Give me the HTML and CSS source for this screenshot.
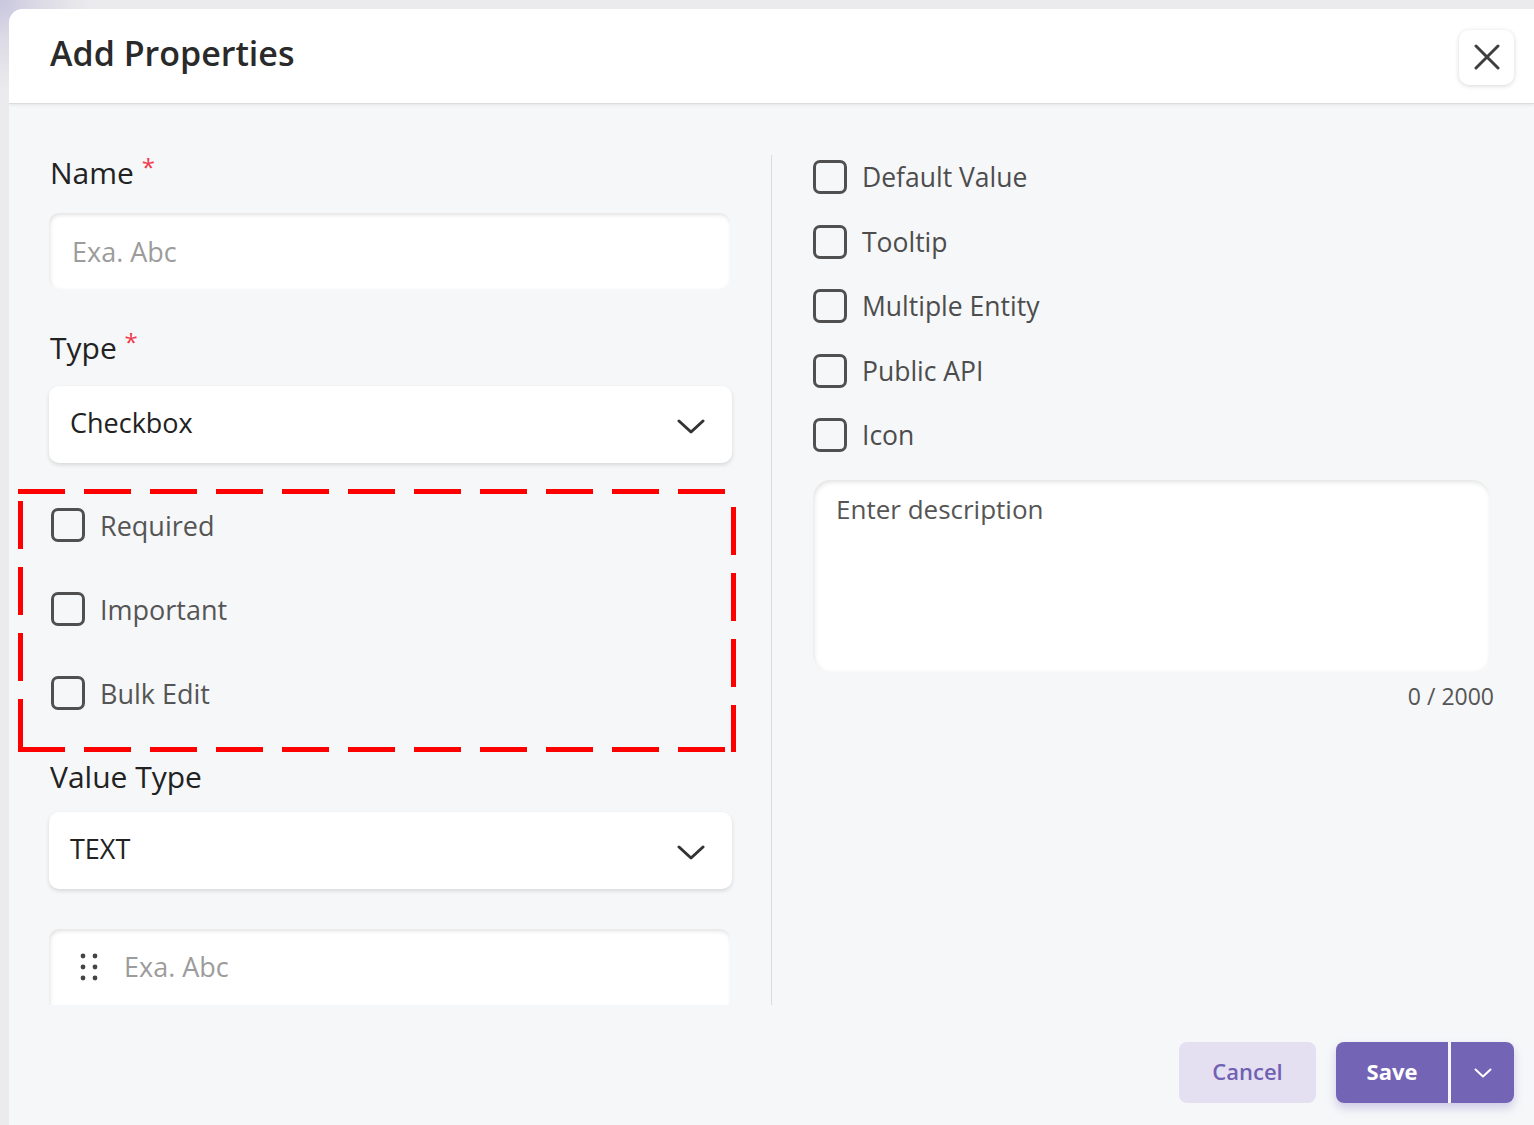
FILE: index.html
```html
<!DOCTYPE html>
<html lang="en">
<head>
    <meta charset="UTF-8">
    <meta name="viewport" content="width=device-width, initial-scale=1.0">
    <title>Add Properties</title>
    <link rel="stylesheet" href="styles.css">
</head>
<body>
    <div class="modal">
        <div class="modal-header">
            <h1>Add Properties</h1>
            <button class="close-btn" aria-label="Close">
                <svg width="26" height="26" viewBox="0 0 26 26"><path d="M2 2 L24 24 M24 2 L2 24" stroke="#3f3f3f" stroke-width="3" stroke-linecap="round"/></svg>
            </button>
        </div>

        <div class="modal-body">
            <div class="col-left">
                <label class="field-label">Name <span class="req">*</span></label>
                <input class="text-input" type="text" placeholder="Exa. Abc">

                <label class="field-label label-type">Type <span class="req">*</span></label>
                <div class="select-box">
                    <span>Checkbox</span>
                    <svg width="28" height="16" viewBox="0 0 28 16"><path d="M2 2 L14 13 L26 2" fill="none" stroke="#333" stroke-width="3" stroke-linecap="round" stroke-linejoin="round"/></svg>
                </div>

                <div class="flag-group">
                    <svg class="marker" width="718" height="263" viewBox="0 0 718 263">
                        <line x1="0" y1="2.5" x2="718" y2="2.5" stroke="#ff0000" stroke-width="5" stroke-dasharray="47 19"/>
                        <line x1="0" y1="260.5" x2="718" y2="260.5" stroke="#ff0000" stroke-width="5" stroke-dasharray="47 19"/>
                        <line x1="2.5" y1="12" x2="2.5" y2="263" stroke="#ff0000" stroke-width="5" stroke-dasharray="48 18"/>
                        <line x1="715.5" y1="18" x2="715.5" y2="263" stroke="#ff0000" stroke-width="5" stroke-dasharray="48 18"/>
                    </svg>
                    <div class="check-row"><span class="box"></span> Required</div>
                    <div class="check-row"><span class="box"></span> Important</div>
                    <div class="check-row"><span class="box"></span> Bulk Edit</div>
                </div>

                <label class="field-label">Value Type</label>
                <div class="select-box">
                    <span>TEXT</span>
                    <svg width="28" height="16" viewBox="0 0 28 16"><path d="M2 2 L14 13 L26 2" fill="none" stroke="#333" stroke-width="3" stroke-linecap="round" stroke-linejoin="round"/></svg>
                </div>

                <div class="option-input">
                    <svg width="18" height="28" viewBox="0 0 18 28"><circle cx="3" cy="3" r="2.4" fill="#444"/><circle cx="15" cy="3" r="2.4" fill="#444"/><circle cx="3" cy="14" r="2.4" fill="#444"/><circle cx="15" cy="14" r="2.4" fill="#444"/><circle cx="3" cy="25" r="2.4" fill="#444"/><circle cx="15" cy="25" r="2.4" fill="#444"/></svg>
                    <input type="text" placeholder="Exa. Abc">
                </div>
            </div>

            <div class="col-right">
                <div class="check-row"><span class="box"></span> Default Value</div>
                <div class="check-row"><span class="box"></span> Tooltip</div>
                <div class="check-row"><span class="box"></span> Multiple Entity</div>
                <div class="check-row"><span class="box"></span> Public API</div>
                <div class="check-row"><span class="box"></span> Icon</div>

                <textarea class="description" placeholder="Enter description"></textarea>
                <div class="counter">0 / 2000</div>
            </div>
        </div>

        <div class="modal-footer">
            <button class="btn-cancel">Cancel</button>
            <div class="save-group">
                <button class="btn-save">Save</button>
                <button class="btn-more" aria-label="More">
                    <svg width="18" height="10" viewBox="0 0 18 10"><path d="M1.5 1.5 L9 8.5 L16.5 1.5" fill="none" stroke="#fff" stroke-width="2" stroke-linecap="round" stroke-linejoin="round"/></svg>
                </button>
            </div>
        </div>
    </div>
</body>
</html>
```

FILE: styles.css
```css
html, body {
    margin: 0;
    height: 100%;
    overflow: hidden;
}
body {
    font-family: "Open Sans", Arial, sans-serif;
    background: radial-gradient(circle at 0 0, #c9c6de 0, #dcdbe6 40px, #ebebed 90px) #ebebed;
    padding: 9px 0 0 9px;
    box-sizing: border-box;
}
.modal {
    background: #f6f7f9;
    border-top-left-radius: 14px;
    overflow: hidden;
    height: 1116px;
}
.modal-header {
    height: 95px;
    background: #fff;
    display: flex;
    align-items: center;
    justify-content: space-between;
    padding: 0 20px 0 41px;
    border-bottom: 1px solid #dcdcdc;
    box-shadow: 0 1px 3px rgba(0, 0, 0, 0.08);
    box-sizing: border-box;
    position: relative;
}
.modal-header h1 {
    margin: 0 0 6px 0;
    font-size: 34px;
    font-weight: 600;
    color: #2a2a2a;
    line-height: 40px;
}
.close-btn {
    width: 55px;
    height: 55px;
    margin-top: 2px;
    border: none;
    border-radius: 10px;
    background: #fff;
    box-shadow: 0 1px 5px rgba(0, 0, 0, 0.16);
    display: flex;
    align-items: center;
    justify-content: center;
    padding: 0;
}
.modal-body {
    height: 901px;
    box-sizing: border-box;
    overflow: hidden;
    padding: 51px 42px 0 40px;
    display: grid;
    grid-template-columns: 683px 1fr;
    column-gap: 39px;
    align-items: start;
}
.col-left {
    display: flex;
    flex-direction: column;
}
.field-label {
    font-size: 30px;
    font-weight: 500;
    color: #222;
    line-height: 36px;
    padding-left: 1px;
}
.req {
    color: #f23a4c;
    font-size: 24px;
    vertical-align: top;
    line-height: 24px;
}
.text-input {
    margin-top: 22px;
    width: 681px;
    height: 76px;
    box-sizing: border-box;
    border: none;
    border-radius: 10px;
    background: #fff;
    box-shadow: inset 1px 2px 4px rgba(0, 0, 0, 0.12);
    padding: 0 23px;
    font-family: inherit;
    font-size: 27px;
    color: #222;
    outline: none;
}
.text-input::placeholder, .option-input input::placeholder {
    color: #9c9c9c;
}
.label-type {
    margin-top: 41px;
}
.select-box {
    margin-top: 17px;
    height: 77px;
    background: #fff;
    border-radius: 10px;
    box-shadow: 0 2px 4px rgba(0, 0, 0, 0.13);
    display: flex;
    align-items: center;
    justify-content: space-between;
    padding: 0 27px 0 21px;
    font-size: 27px;
    color: #222;
}
.label-type + .select-box {
    margin-top: 20px;
}
.select-box span {
    margin-top: -4px;
}
.select-box svg {
    margin-top: 4px;
}
.flag-group {
    position: relative;
    padding: 45px 0 49px 2px;
    display: flex;
    flex-direction: column;
    gap: 50px;
}
.marker {
    position: absolute;
    left: -31px;
    top: 26px;
}
.check-row {
    display: flex;
    align-items: center;
    height: 34px;
    font-size: 27px;
    font-weight: 500;
    color: #555;
    gap: 15px;
}
.box {
    width: 34px;
    height: 34px;
    box-sizing: border-box;
    border: 3px solid #505050;
    border-radius: 7px;
    flex-shrink: 0;
}
.option-input {
    margin-top: 40px;
    height: 90px;
    width: 681px;
    background: #fff;
    border-radius: 10px;
    box-shadow: inset 1px 2px 4px rgba(0, 0, 0, 0.12);
    display: flex;
    align-items: flex-start;
    padding: 24px 0 0 31px;
    box-sizing: border-box;
    gap: 26px;
}
.option-input input {
    border: none;
    background: transparent;
    font-family: inherit;
    font-size: 27px;
    outline: none;
    padding: 0;
    margin-top: -5px;
}
.col-right {
    border-left: 1px solid #dcdcdc;
    padding: 5px 0 0 41px;
    align-self: stretch;
    display: flex;
    flex-direction: column;
}
.col-right .check-row {
    margin-bottom: 30.5px;
    color: #4d4d4d;
    font-size: 26.5px;
}
.description {
    margin-top: -3px;
    width: 677px;
    height: 192px;
    box-sizing: border-box;
    border: none;
    border-radius: 18px;
    background: #fff;
    box-shadow: inset 1px 2px 5px rgba(0, 0, 0, 0.12);
    padding: 11px 23px;
    font-family: inherit;
    font-size: 26px;
    resize: none;
    outline: none;
}
.description::placeholder {
    color: #555;
}
.counter {
    text-align: right;
    margin-top: 11px;
    width: 681px;
    font-size: 23px;
    color: #555;
    line-height: 26px;
}
.modal-footer {
    display: flex;
    justify-content: flex-end;
    align-items: flex-start;
    gap: 20px;
    padding: 37px 20px 0 0;
}
.btn-cancel {
    width: 137px;
    height: 61px;
    border: none;
    border-radius: 8px;
    background: #e4e0f2;
    color: #7161b2;
    font-family: inherit;
    font-size: 22px;
    font-weight: 600;
    padding-bottom: 4px;
}
.save-group {
    display: flex;
    gap: 3px;
    border-radius: 8px;
    box-shadow: 0 5px 10px rgba(100, 88, 180, 0.28);
}
.btn-save, .btn-more {
    height: 61px;
    border: none;
    background: #7464b5;
    color: #fff;
    font-family: inherit;
    font-size: 22px;
    font-weight: 700;
}
.btn-save {
    width: 112px;
    border-radius: 8px 0 0 8px;
    padding-bottom: 4px;
}
.btn-more {
    width: 63px;
    border-radius: 0 8px 8px 0;
    display: flex;
    align-items: center;
    justify-content: center;
    padding: 0;
}
```
